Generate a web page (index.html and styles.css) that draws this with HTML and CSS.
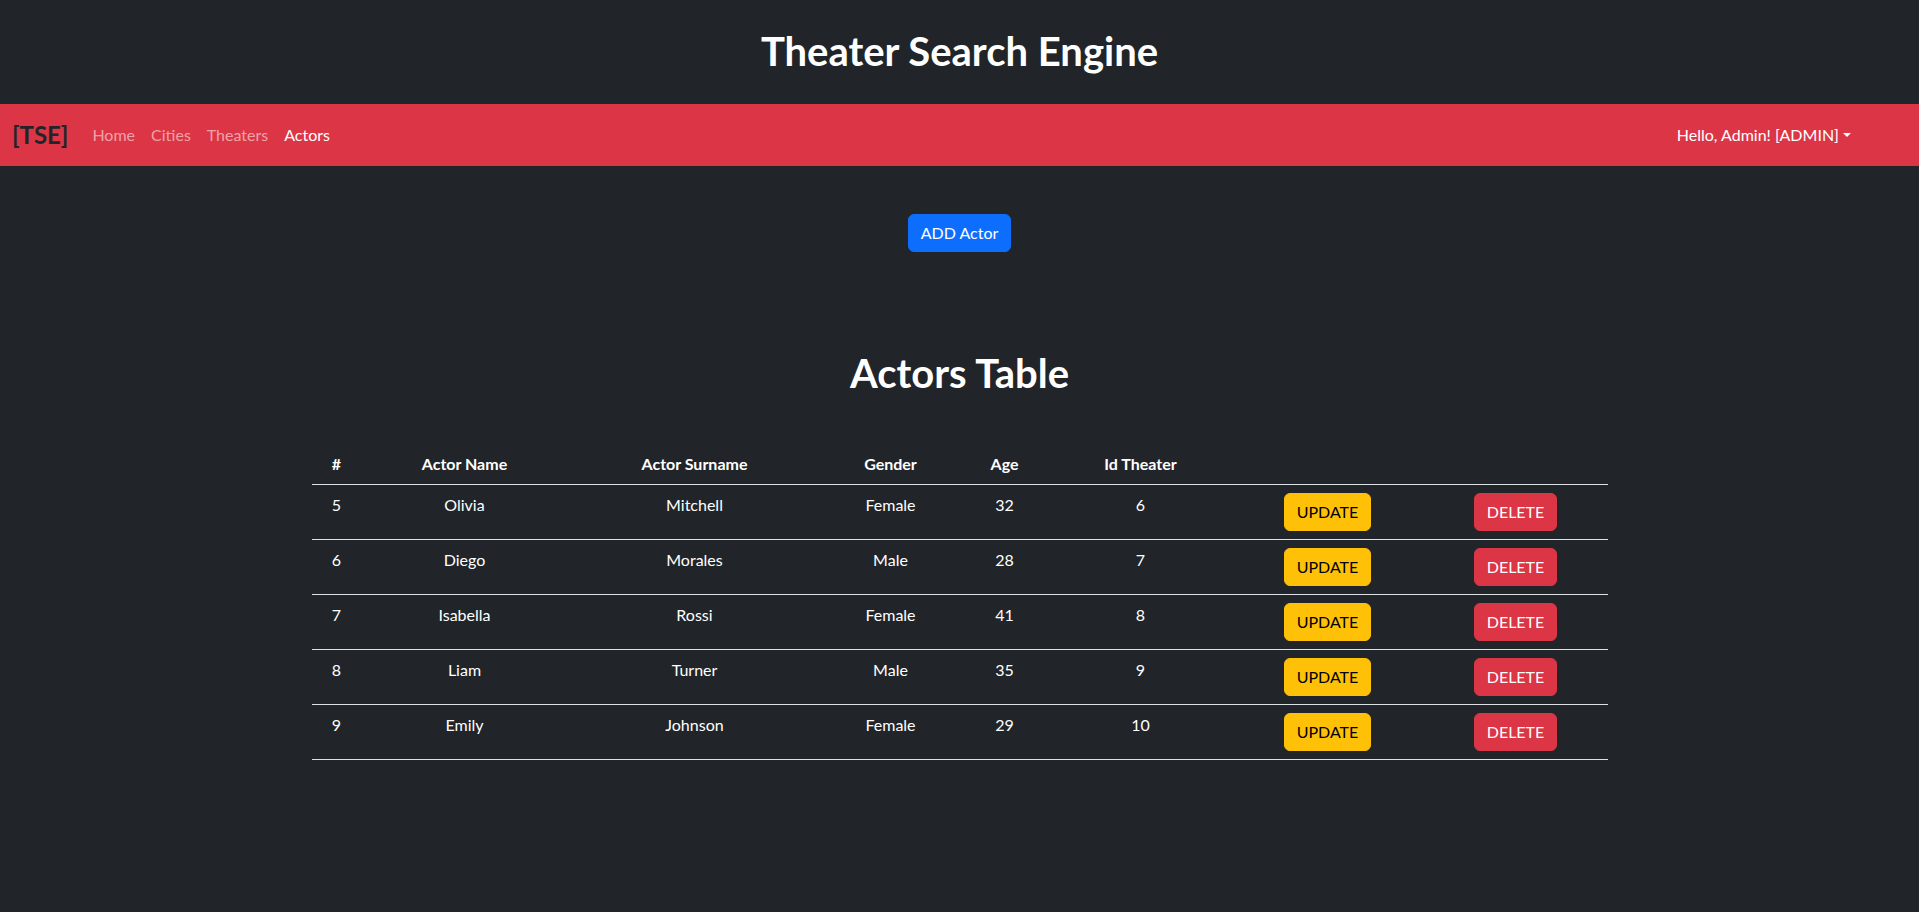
FILE: index.html
```html
<!DOCTYPE html>
<html lang="en">
<head>
<meta charset="utf-8">
<title>Theater Search Engine</title>
<link rel="stylesheet" href="styles.css">
</head>
<body>
<header class="site-header">
  <h1 class="site-title">Theater Search Engine</h1>
</header>
<nav class="navbar">
  <a class="brand" href="#">[TSE]</a>
  <ul class="nav-links">
    <li><a class="nav-link" href="#">Home</a></li>
    <li><a class="nav-link" href="#">Cities</a></li>
    <li><a class="nav-link" href="#">Theaters</a></li>
    <li><a class="nav-link active" href="#">Actors</a></li>
  </ul>
  <div class="nav-user">
    <a class="nav-link user-toggle" href="#">Hello, Admin! [ADMIN]</a>
  </div>
</nav>
<main class="content">
  <div class="add-wrap">
    <button class="btn btn-primary" type="button">ADD Actor</button>
  </div>
  <h2 class="table-title">Actors Table</h2>
  <table class="actors">
    <thead>
      <tr>
        <th class="c-num">#</th>
        <th class="c-name">Actor Name</th>
        <th class="c-surname">Actor Surname</th>
        <th class="c-gender">Gender</th>
        <th class="c-age">Age</th>
        <th class="c-theater">Id Theater</th>
        <th class="c-update"></th>
        <th class="c-delete"></th>
      </tr>
    </thead>
    <tbody>
      <tr><td>5</td><td>Olivia</td><td>Mitchell</td><td>Female</td><td>32</td><td>6</td><td><button class="btn btn-warning" type="button">UPDATE</button></td><td><button class="btn btn-danger" type="button">DELETE</button></td></tr>
      <tr><td>6</td><td>Diego</td><td>Morales</td><td>Male</td><td>28</td><td>7</td><td><button class="btn btn-warning" type="button">UPDATE</button></td><td><button class="btn btn-danger" type="button">DELETE</button></td></tr>
      <tr><td>7</td><td>Isabella</td><td>Rossi</td><td>Female</td><td>41</td><td>8</td><td><button class="btn btn-warning" type="button">UPDATE</button></td><td><button class="btn btn-danger" type="button">DELETE</button></td></tr>
      <tr><td>8</td><td>Liam</td><td>Turner</td><td>Male</td><td>35</td><td>9</td><td><button class="btn btn-warning" type="button">UPDATE</button></td><td><button class="btn btn-danger" type="button">DELETE</button></td></tr>
      <tr><td>9</td><td>Emily</td><td>Johnson</td><td>Female</td><td>29</td><td>10</td><td><button class="btn btn-warning" type="button">UPDATE</button></td><td><button class="btn btn-danger" type="button">DELETE</button></td></tr>
    </tbody>
  </table>
</main>
</body>
</html>
```

FILE: styles.css
```css
* { box-sizing: border-box; }

html, body {
  margin: 0;
  padding: 0;
}

body {
  background: #212529;
  color: #ffffff;
  font-family: "Segoe UI", Lato, "Noto Sans", sans-serif;
  font-size: 16px;
  line-height: 1.5;
  min-height: 912px;
}

.site-header {
  padding: 27px 0 29px;
  text-align: center;
}

.site-title {
  margin: 0;
  font-size: 40px;
  font-weight: 700;
  line-height: 48px;
  color: #ffffff;
}

.navbar {
  display: flex;
  align-items: center;
  background: #dc3545;
  padding: 8px 60px 8px 12px;
}

.brand {
  font-size: 24px;
  font-weight: 700;
  line-height: 36px;
  padding: 5px 0;
  margin-right: 16px;
  color: #212529;
  text-decoration: none;
}

.nav-links {
  display: flex;
  list-style: none;
  margin: 0;
  padding: 0;
}

.nav-link {
  display: block;
  padding: 8px;
  color: rgba(255, 255, 255, 0.55);
  text-decoration: none;
  line-height: 24px;
}

.nav-link.active {
  color: #ffffff;
}

.nav-user {
  margin-left: auto;
}

.user-toggle {
  color: #ffffff;
}

.user-toggle::after {
  content: "";
  display: inline-block;
  margin-left: 4px;
  vertical-align: 4px;
  border-top: 4.8px solid #ffffff;
  border-right: 4.8px solid transparent;
  border-left: 4.8px solid transparent;
}

.content {
  display: flex;
  flex-direction: column;
  align-items: center;
}

.add-wrap {
  margin-top: 48px;
}

.btn {
  display: inline-block;
  font-family: inherit;
  font-size: 16px;
  line-height: 24px;
  padding: 6px 12px;
  border: 1px solid transparent;
  border-radius: 6px;
  cursor: pointer;
}

.btn-primary {
  background: #0d6efd;
  border-color: #0d6efd;
  color: #ffffff;
}

.btn-warning {
  background: #ffc107;
  border-color: #ffc107;
  color: #000000;
}

.btn-danger {
  background: #dc3545;
  border-color: #dc3545;
  color: #ffffff;
}

.table-title {
  margin: 97px 0 47px;
  font-size: 40px;
  font-weight: 700;
  line-height: 48px;
}

.actors {
  width: 1296px;
  border-collapse: collapse;
  table-layout: fixed;
  color: #ffffff;
}

.actors th,
.actors td {
  padding: 8px;
  text-align: center;
  vertical-align: top;
  border-bottom: 1px solid #dee2e6;
}

.actors th {
  font-weight: 700;
}

.c-num { width: 50px; }
.c-name { width: 206px; }
.c-surname { width: 254px; }
.c-gender { width: 138px; }
.c-age { width: 90px; }
.c-theater { width: 182px; }
.c-update { width: 192px; }
.c-delete { width: 184px; }
```
